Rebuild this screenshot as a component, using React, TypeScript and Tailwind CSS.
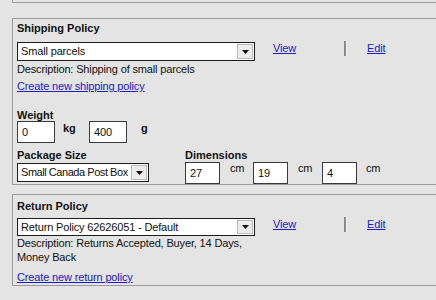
import React from 'react';

const link = 'text-[#1a1acd] underline';

function Select({ value, width, height = 'h-[19px]', tight = false }: { value: string; width: string; height?: string; tight?: boolean }) {
  return (
    <div className={`${width} ${height} flex border border-[#1c1c1c] bg-white`}>
      <div className={`flex-1 pl-[3px] leading-[17px] whitespace-nowrap overflow-hidden ${tight ? 'tracking-[-0.45px]' : ''}`}>{value}</div>
      <div className="w-[16px] my-[1px] mr-[1px] border border-[#b9b9b9] bg-[#ececec] flex items-center justify-center">
        <svg width="7" height="4" viewBox="0 0 7 4">
          <path d="M0 0h7L3.5 4z" fill="#111" />
        </svg>
      </div>
    </div>
  );
}

function Input({ value, width = 'w-[38px]' }: { value: string; width?: string }) {
  return (
    <div className={`${width} h-[22px] border border-[#3a3a3a] bg-white pl-[4px] leading-[20px]`}>{value}</div>
  );
}

function ViewEdit() {
  return (
    <div className="flex items-start">
      <div className="w-[71px] ml-[18px] leading-[13px]">
        <a className={link}>View</a>
      </div>
      <div className="flex -mt-[1px] h-[15px]">
        <div className="w-[2px] bg-[#8a8a8a]" />
        <div className="w-[1px] bg-[#f4f4f4]" />
      </div>
      <div className="ml-[20px] leading-[13px]">
        <a className={link}>Edit</a>
      </div>
    </div>
  );
}

export default function App() {
  return (
    <div
      className="w-[436px] h-[300px] overflow-hidden bg-[#e4e4e4] text-[11px] text-[#111] tracking-[-0.15px]"
      style={{ fontFamily: '"Liberation Sans", Arial, sans-serif' }}
    >
      <div className="ml-[12px] h-[3px] border-l border-b border-[#9c9c9c]" />

      {/* Shipping policy */}
      <div className="ml-[12px] mt-[15px] border-l border-t border-b border-[#9c9c9c] pl-[4px] pt-[3px]">
        <div className="font-bold leading-[13px] tracking-normal">Shipping Policy</div>
        <div className="flex items-start mt-[7px]">
          <Select value="Small parcels" width="w-[238px]" />
          <ViewEdit />
        </div>
        <div className="mt-[2px] leading-[13px]">Description: Shipping of small parcels</div>
        <div className="mt-[4px] leading-[13px]">
          <a className={link}>Create new shipping policy</a>
        </div>

        <div className="mt-[16px] font-bold leading-[12px] tracking-normal">Weight</div>
        <div className="flex items-start">
          <Input value="0" />
          <div className="w-[34px] pl-[8px] mt-[1px] font-bold leading-[13px] tracking-normal">kg</div>
          <Input value="400" />
          <div className="pl-[14px] mt-[1px] font-bold leading-[13px] tracking-normal">g</div>
        </div>

        <div className="flex items-start mt-[5px]">
          <div className="w-[168px]">
            <div className="font-bold leading-[14px] tracking-normal">Package Size</div>
            <div className="mt-[1px]">
              <Select value="Small Canada Post Box" width="w-[132px]" tight />
            </div>
          </div>
          <div>
            <div className="font-bold leading-[14px] tracking-normal">Dimensions</div>
            <div className="flex items-start">
              <Input value="27" width="w-[35px]" />
              <div className="w-[33px] pl-[10px] leading-[13px]">cm</div>
              <Input value="19" width="w-[35px]" />
              <div className="w-[34px] pl-[10px] leading-[13px]">cm</div>
              <Input value="4" width="w-[35px]" />
              <div className="pl-[9px] leading-[13px]">cm</div>
            </div>
          </div>
        </div>
      </div>

      {/* Return policy */}
      <div className="ml-[12px] mt-[9px] border-l border-t border-b border-[#9c9c9c] pl-[4px] pt-[5px] pb-[1px]">
        <div className="font-bold leading-[13px] tracking-normal">Return Policy</div>
        <div className="flex items-start mt-[5px]">
          <Select value="Return Policy 62626051 - Default" width="w-[238px]" height="h-[18px]" />
          <ViewEdit />
        </div>
        <div className="w-[238px] leading-[14px]">
          Description: Returns Accepted, Buyer, 14 Days, Money Back
        </div>
        <div className="mt-[7px] leading-[13px]">
          <a className={link}>Create new return policy</a>
        </div>
      </div>
    </div>
  );
}
